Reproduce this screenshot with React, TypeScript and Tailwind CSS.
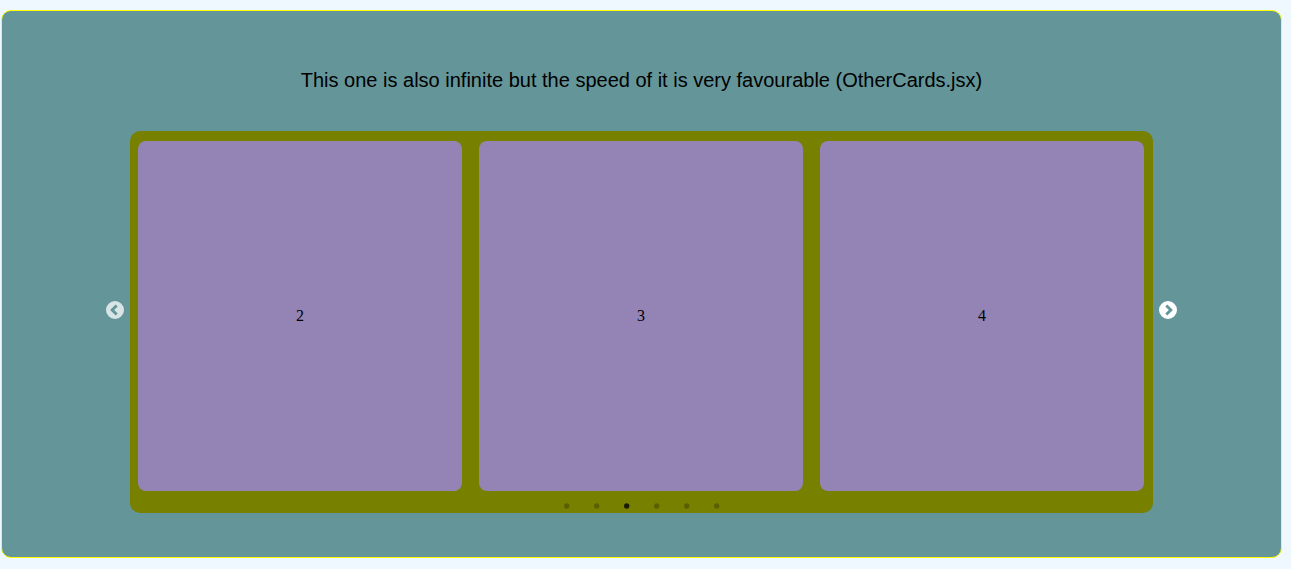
const cards = [2, 3, 4];
const dots = [0, 1, 2, 3, 4, 5];

function Arrow({ next = false }: { next?: boolean }) {
  return (
    <button
      aria-label={next ? "Next" : "Previous"}
      className={next ? "mt-[170px] ml-[6px] h-[18px] w-[18px] shrink-0" : "mt-[170px] mr-[6px] h-[18px] w-[18px] shrink-0 opacity-75"}
    >
      <svg viewBox="0 0 18 18" className={next ? "block h-full w-full" : "block h-full w-full -scale-x-100"}>
        <path
          fill="#fff"
          fillRule="evenodd"
          d="M9 0a9 9 0 1 1 0 18A9 9 0 0 1 9 0ZM8.3 3.4 6.3 5.4 9.9 9l-3.6 3.6 2 2L13.9 9Z"
        />
      </svg>
    </button>
  );
}

export default function App() {
  return (
    <div className="h-[569px] overflow-hidden bg-[#f0f8ff] pt-[10px] pl-px">
      <section className="flex h-[548px] w-[1281px] flex-col rounded-[10px] border border-[#ffff00] bg-[#649599]">
        <h2 className="mt-[54px] h-[30px] text-center font-['Liberation_Sans',Arial,sans-serif] text-[20px] leading-[30px] text-black">
          This one is also infinite but the speed of it is very favourable (OtherCards.jsx)
        </h2>
        <div className="mt-[36px] ml-[104px] flex items-start">
          <Arrow />
          <div className="h-[382px] w-[1023px] rounded-[10px] bg-[#788000] pt-[10px] pl-[8px]">
            <div className="flex gap-[17px]">
              {cards.map((card) => (
                <div
                  key={card}
                  className="flex h-[350px] w-[324px] items-center justify-center rounded-[8px] bg-[#9384b5] font-['Liberation_Serif','Times_New_Roman',serif] text-[16px] text-black"
                >
                  {card}
                </div>
              ))}
            </div>
            <svg viewBox="0 0 156 6" className="mt-[12px] ml-[426px] h-[6px] w-[156px]">
              {dots.map((dot) => (
                <circle key={dot} cx={2.7 + dot * 30} cy={3} r={2.7} fill="#000" fillOpacity={dot === 2 ? 0.78 : 0.25} />
              ))}
            </svg>
          </div>
          <Arrow next />
        </div>
      </section>
    </div>
  );
}
